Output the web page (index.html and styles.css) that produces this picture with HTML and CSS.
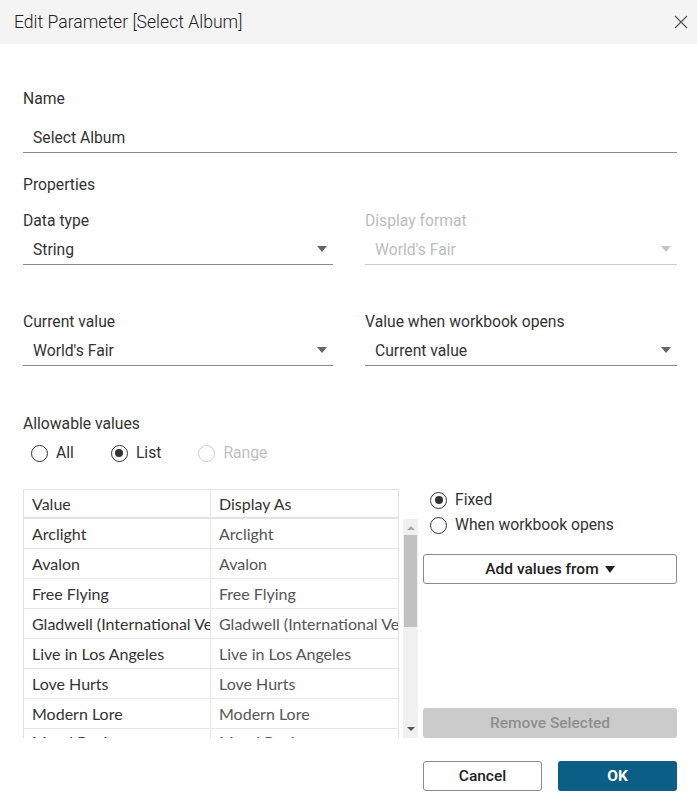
FILE: index.html
```html
<!DOCTYPE html>
<html>
<head>
<meta charset="utf-8">
<link rel="stylesheet" href="styles.css">
</head>
<body>
<div class="dialog">
  <div class="titlebar">
    <span class="title">Edit Parameter [Select Album]</span>
    <svg class="close" width="14" height="14" viewBox="0 0 14 14"><path d="M1 1L13 13M13 1L1 13" stroke="#555" stroke-width="1.2" fill="none"/></svg>
  </div>
  <div class="content">
    <div class="label name-label">Name</div>
    <div class="input">Select Album</div>
    <div class="label properties">Properties</div>
    <div class="grid2">
      <div class="field">
        <div class="label">Data type</div>
        <div class="select"><span>String</span><span class="arrow"></span></div>
      </div>
      <div class="field disabled">
        <div class="label">Display format</div>
        <div class="select"><span>World's Fair</span><span class="arrow"></span></div>
      </div>
    </div>
    <div class="grid2 row2">
      <div class="field">
        <div class="label">Current value</div>
        <div class="select"><span>World's Fair</span><span class="arrow"></span></div>
      </div>
      <div class="field">
        <div class="label">Value when workbook opens</div>
        <div class="select"><span>Current value</span><span class="arrow"></span></div>
      </div>
    </div>
    <div class="label allow">Allowable values</div>
    <div class="radios">
      <label class="radio"><span class="circle"></span>All</label>
      <label class="radio"><span class="circle checked"></span>List</label>
      <label class="radio disabled"><span class="circle"></span>Range</label>
    </div>
    <div class="listarea">
      <div class="list">
        <div class="thead">
          <div class="cell">Value</div>
          <div class="cell">Display As</div>
        </div>
        <div class="bodyrow">
          <div class="tbody">
            <div class="tr"><div class="cell v">Arclight</div><div class="cell d">Arclight</div></div>
            <div class="tr"><div class="cell v">Avalon</div><div class="cell d">Avalon</div></div>
            <div class="tr"><div class="cell v">Free Flying</div><div class="cell d">Free Flying</div></div>
            <div class="tr"><div class="cell v">Gladwell (International Version)</div><div class="cell d">Gladwell (International Version)</div></div>
            <div class="tr"><div class="cell v">Live in Los Angeles</div><div class="cell d">Live in Los Angeles</div></div>
            <div class="tr"><div class="cell v">Love Hurts</div><div class="cell d">Love Hurts</div></div>
            <div class="tr"><div class="cell v">Modern Lore</div><div class="cell d">Modern Lore</div></div>
            <div class="tr"><div class="cell v">Moral Panic</div><div class="cell d">Moral Panic</div></div>
          </div>
          <div class="scrollbar">
            <span class="sb-up"></span>
            <span class="thumb"></span>
            <span class="sb-down"></span>
          </div>
        </div>
      </div>
      <div class="side">
        <div class="side-top">
          <label class="radio"><span class="circle checked"></span>Fixed</label>
          <label class="radio"><span class="circle"></span>When workbook opens</label>
          <button class="btn add">Add values from <span class="caret"></span></button>
        </div>
        <button class="btn remove">Remove Selected</button>
      </div>
    </div>
    <div class="footer">
      <button class="btn cancel">Cancel</button>
      <button class="btn ok">OK</button>
    </div>
  </div>
</div>
</body>
</html>
```
FILE: styles.css
```css
html, body {
  margin: 0;
  padding: 0;
  background: #fff;
}
body {
  font-family: Roboto, "Liberation Sans", sans-serif;
  color: #333;
  font-size: 15.7px;
}
.dialog {
  width: 697px;
  height: 812px;
  background: #fff;
}
.titlebar {
  height: 44px;
  background: #f4f4f4;
  display: flex;
  align-items: center;
  justify-content: space-between;
  padding: 0 9px 0 14px;
  box-sizing: border-box;
}
.title {
  font-size: 17.6px;
  font-weight: 300;
  color: #222;
  transform: scaleY(1.06);
}
.close {
  display: block;
}
.content {
  padding: 0 20px 0 23px;
}
.label {
  height: 20px;
  line-height: 20px;
  color: #333;
}
.name-label {
  margin-top: 45px;
}
.input {
  margin-top: 13px;
  height: 30px;
  line-height: 31px;
  padding-left: 10px;
  border-bottom: 1px solid #888;
}
.properties {
  margin-top: 22px;
}
.grid2 {
  display: grid;
  grid-template-columns: 310px 312px;
  column-gap: 32px;
  margin-top: 16px;
}
.row2 {
  margin-top: 47px;
}
.field .label {
  margin-bottom: 3px;
}
.select {
  height: 30px;
  line-height: 30px;
  border-bottom: 1px solid #888;
  display: flex;
  justify-content: space-between;
  align-items: center;
  padding: 0 6px 0 10px;
}
.select span:first-child {
  padding-top: 1px;
}
.arrow {
  width: 0;
  height: 0;
  border-left: 5px solid transparent;
  border-right: 5px solid transparent;
  border-top: 6px solid #666;
}
.field.disabled .label,
.field.disabled .select {
  color: #bdbdbd;
}
.field.disabled .select {
  border-bottom-color: #ccc;
}
.field.disabled .arrow {
  border-top-color: #c4c4c4;
}
.allow {
  margin-top: 48px;
}
.radios {
  display: flex;
  margin-top: 9px;
  padding-left: 8px;
  gap: 37px;
}
.radio {
  display: flex;
  align-items: center;
  gap: 8px;
  height: 20px;
  line-height: 20px;
  color: #333;
}
.radio.disabled {
  color: #bfbfbf;
}
.circle {
  width: 17px;
  height: 17px;
  border: 1.3px solid #333;
  border-radius: 50%;
  box-sizing: border-box;
  display: flex;
  align-items: center;
  justify-content: center;
  flex: none;
}
.radio.disabled .circle {
  border-color: #ccc;
}
.circle.checked::after {
  content: "";
  width: 8px;
  height: 8px;
  border-radius: 50%;
  background: #333;
}
.listarea {
  display: flex;
  margin-top: 26px;
  gap: 5px;
}
.list {
  width: 395px;
}
.thead {
  width: 376px;
  display: grid;
  grid-template-columns: 187px 188px;
  border: 1px solid #e3e3e3;
  border-bottom: 2px solid #e3e3e3;
  box-sizing: border-box;
  height: 30px;
}
.thead .cell {
  line-height: 28px;
  color: #333;
}
.cell {
  padding-left: 8px;
  white-space: nowrap;
  overflow: hidden;
  font-family: Lato, Roboto, sans-serif;
  font-size: 16px;
}
.thead .cell:first-child {
  border-right: 1px solid #e8e8e8;
}
.bodyrow {
  display: flex;
  gap: 4px;
}
.tbody {
  width: 376px;
  height: 219px;
  overflow: hidden;
  border-left: 1px solid #e3e3e3;
  border-right: 1px solid #e3e3e3;
  box-sizing: border-box;
}
.tr {
  display: grid;
  grid-template-columns: 187px 187px;
  height: 30px;
  border-bottom: 1px solid #e6e6e6;
  box-sizing: border-box;
}
.tr .cell {
  line-height: 29px;
}
.tr:last-child .cell {
  line-height: 26px;
}
.tr .cell.v {
  color: #333;
  border-right: 1px solid #e8e8e8;
}
.tr .cell.d {
  color: #555;
}
.scrollbar {
  width: 15px;
  height: 219px;
  background: #f0f0f0;
  display: flex;
  flex-direction: column;
  align-items: center;
}
.sb-up {
  margin-top: 7px;
  width: 0;
  height: 0;
  border-left: 4px solid transparent;
  border-right: 4px solid transparent;
  border-bottom: 4px solid #a8a8a8;
}
.thumb {
  margin-top: 5px;
  width: 13px;
  height: 92px;
  background: #c1c1c1;
}
.sb-down {
  margin-top: auto;
  margin-bottom: 7px;
  width: 0;
  height: 0;
  border-left: 4px solid transparent;
  border-right: 4px solid transparent;
  border-top: 4px solid #555;
}
.side {
  width: 254px;
  display: flex;
  flex-direction: column;
  justify-content: space-between;
}
.side-top {
  display: flex;
  flex-direction: column;
  padding-top: 1px;
  padding-left: 7px;
  gap: 5px;
}
.btn {
  font-family: Roboto, "Liberation Sans", sans-serif;
  font-size: 15.5px;
  font-weight: 500;
  height: 30px;
  border-radius: 3px;
  box-sizing: border-box;
  cursor: default;
}
.add {
  margin-top: 14px;
  margin-left: -7px;
  width: 254px;
  background: #fff;
  border: 1px solid #8a8a8a;
  color: #222;
  display: flex;
  align-items: center;
  justify-content: center;
  gap: 6px;
}
.caret {
  width: 0;
  height: 0;
  border-left: 5px solid transparent;
  border-right: 5px solid transparent;
  border-top: 7px solid #222;
}
.remove {
  width: 254px;
  background: #cbcbcb;
  border: none;
  color: #8f8f8f;
}
.footer {
  display: flex;
  justify-content: flex-end;
  gap: 16px;
  margin-top: 23px;
}
.cancel {
  width: 119px;
  background: #fff;
  border: 1px solid #8a8a8a;
  color: #222;
}
.ok {
  width: 119px;
  background: #0b5f86;
  border: none;
  color: #fff;
  font-weight: 700;
}
```
